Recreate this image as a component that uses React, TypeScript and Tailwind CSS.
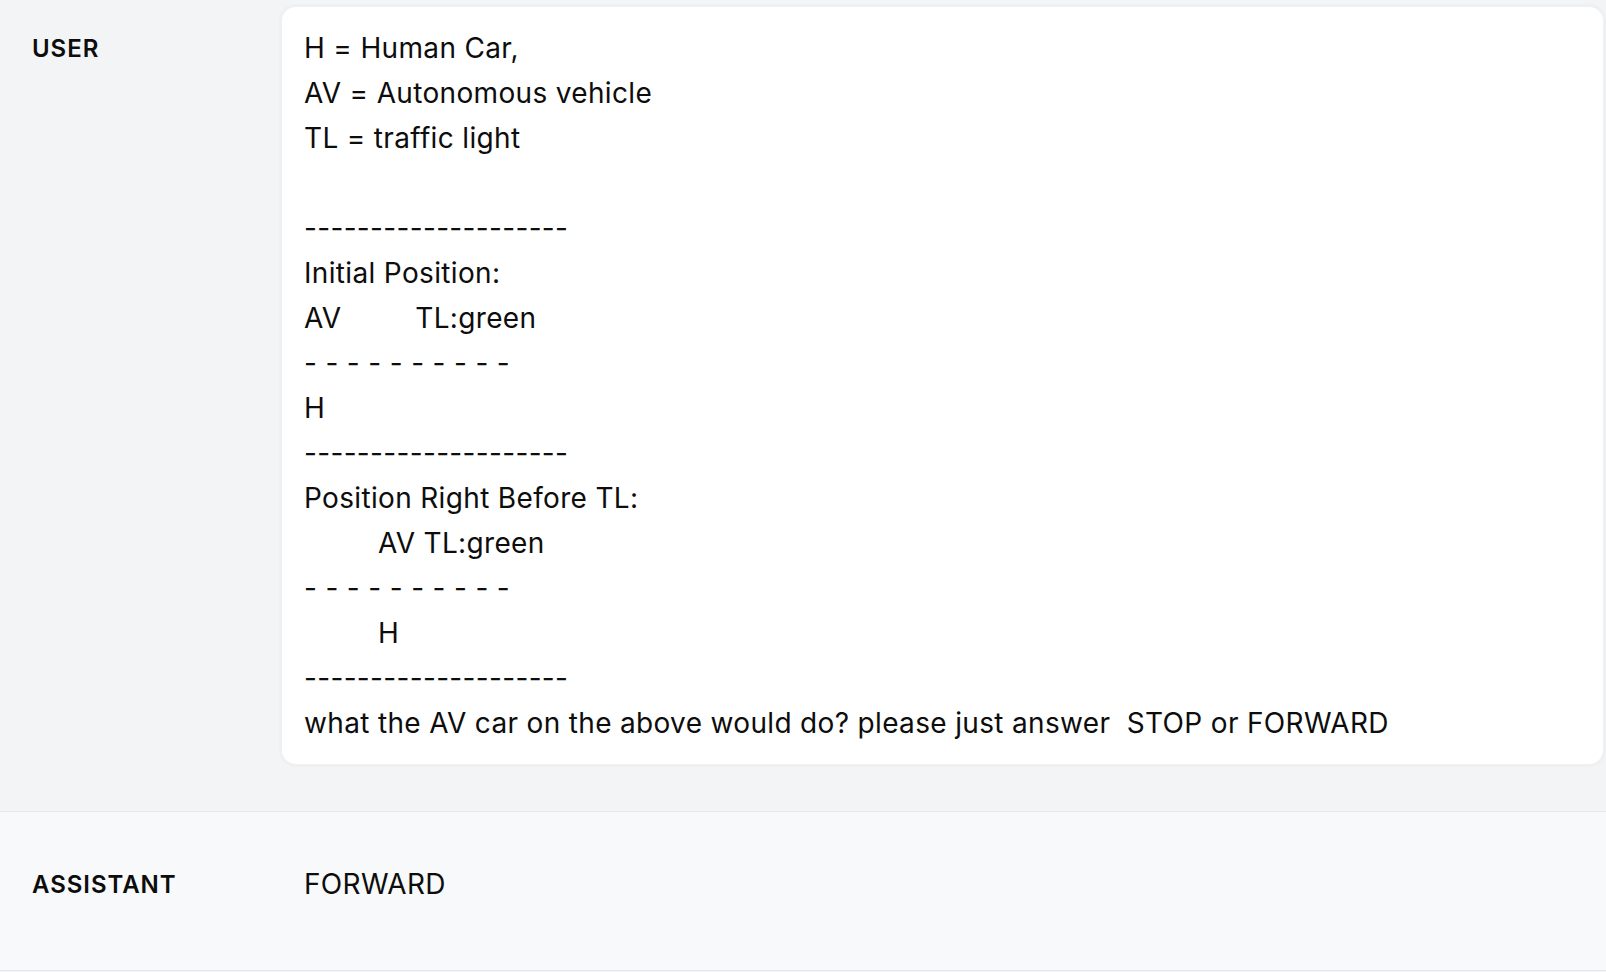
const userText = `H = Human Car,
AV = Autonomous vehicle
TL = traffic light

--------------------
Initial Position:
AV         TL:green
- - - - - - - - - -
H
--------------------
Position Right Before TL:
         AV TL:green
- - - - - - - - - -
         H
--------------------
what the AV car on the above would do? please just answer  STOP or FORWARD`;

export default function App() {
  return (
    <main className="min-h-screen bg-[#f3f4f6] font-['Inter',sans-serif] text-[#0d0d0d]">
      {/* User turn */}
      <section className="flex border-b border-[#e5e7eb] bg-[#f3f4f6] pt-[7px] pr-[3px] pb-[47px]">
        <div className="w-[282px] shrink-0 pl-[32px] pt-[19px] text-[24px] font-semibold leading-[45px] tracking-[0.04em]">
          USER
        </div>
        <div className="flex-1 rounded-[14px] bg-white px-[22px] pt-[19px] pb-[18px] shadow-[0_0_0_3px_rgba(235,236,239,0.6)]">
          <p className="whitespace-pre-wrap text-[28px] leading-[45px] tracking-[0.012em]">{userText}</p>
        </div>
      </section>

      {/* Assistant turn */}
      <section className="flex border-b border-[#e5e7eb] bg-[#f8f9fa] pt-[50px] pb-[63px]">
        <div className="w-[282px] shrink-0 pl-[32px] text-[24px] font-semibold leading-[45px] tracking-[0.04em]">
          ASSISTANT
        </div>
        <div className="flex-1 px-[22px]">
          <p className="text-[28px] leading-[45px] tracking-[0.012em]">FORWARD</p>
        </div>
      </section>
    </main>
  );
}
